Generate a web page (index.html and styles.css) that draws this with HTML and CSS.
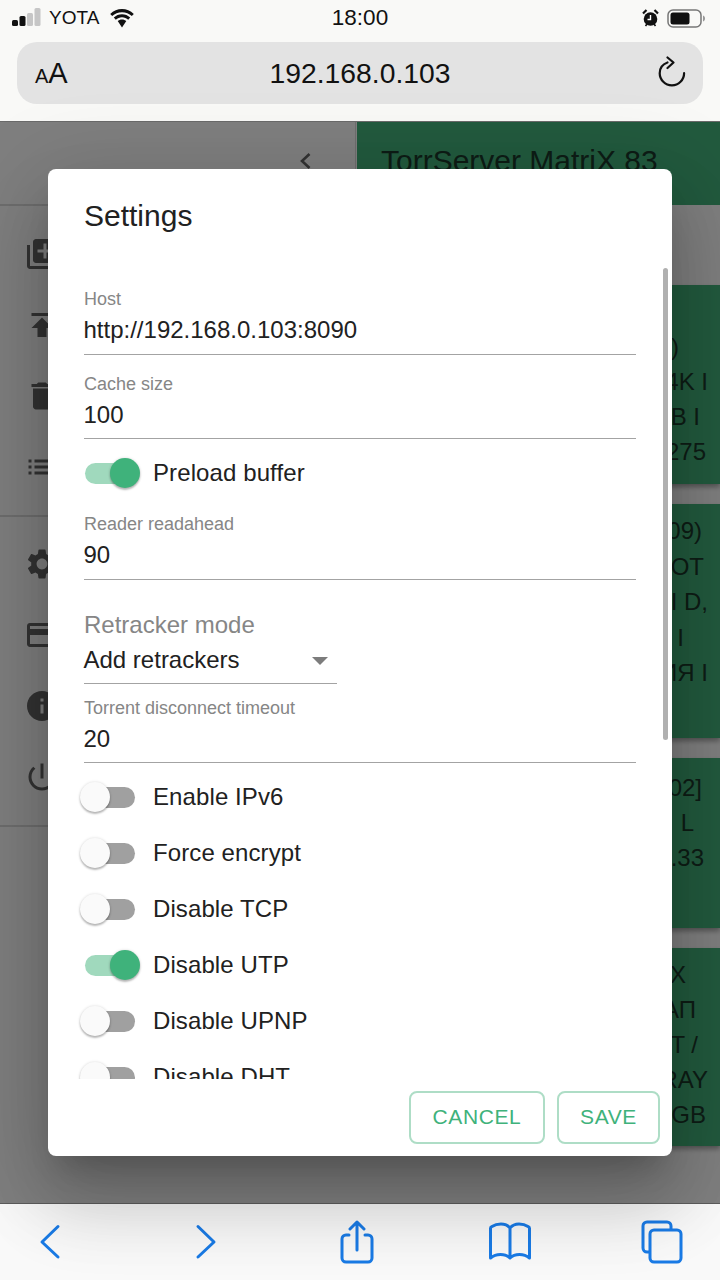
FILE: index.html
```html
<!DOCTYPE html>
<html lang="en">
<head>
  <meta charset="UTF-8" />
  <meta name="viewport" content="width=device-width, initial-scale=1.0" />
  <title>Settings</title>
  <link rel="stylesheet" href="styles.css">
</head>
<body>
  <!-- Safari top -->
  <header class="browser-top">
    <div class="status-bar">
      <div class="status-left">
        <svg class="signal" width="31" height="20" viewBox="0 0 31 20">
          <rect x="1" y="12" width="6" height="6" rx="1.5" fill="#111"/>
          <rect x="8.500" y="8" width="6" height="10" rx="1.5" fill="#111"/>
          <rect x="16" y="5" width="6" height="13" rx="1.5" fill="#c6c6c6"/>
          <rect x="23.500" y="0" width="6" height="18" rx="1.5" fill="#c6c6c6"/>
        </svg>
        <span class="carrier">YOTA</span>
        <svg class="wifi" width="26" height="19" viewBox="0 0 26 19">
          <path d="M13 3.200c3.800 0 7.200 1.500 9.800 3.900l2-2.200C21.500 1.900 17.400 0 13 0S4.500 1.900 1.200 4.900l2 2.200C5.800 4.700 9.200 3.200 13 3.200z" fill="#111"/>
          <path d="M13 8.300c2.400 0 4.500.9 6.200 2.400l2-2.200C19 6.400 16.100 5.200 13 5.200S7 6.400 4.800 8.500l2 2.200c1.700-1.500 3.800-2.400 6.200-2.400z" fill="#111"/>
          <path d="M13 10.400c-1.700 0-3.200.6-4.300 1.700L13 18.400l4.300-6.300c-1.100-1.100-2.600-1.700-4.300-1.700z" fill="#111"/>
        </svg>
      </div>
      <div class="clock">18:00</div>
      <div class="status-right">
        <svg width="17" height="18" viewBox="0 0 17 18">
          <circle cx="8.500" cy="10" r="6.800" fill="#111"/>
          <path d="M1 4.500 4.500 1M16 4.500 12.500 1" stroke="#111" stroke-width="2.200"/>
          <path d="M8.500 6v4.500h-3" stroke="#fff" stroke-width="1.400" fill="none"/>
          <path d="M3.500 17l1.500-2M13.500 17 12 15" stroke="#111" stroke-width="1.600"/>
        </svg>
        <svg width="39" height="19" viewBox="0 0 39 19">
          <rect x="1" y="1" width="33" height="17" rx="5" fill="none" stroke="#777" stroke-width="1.500"/>
          <rect x="3.500" y="3.500" width="19" height="12" rx="2.500" fill="#111"/>
          <path d="M36 6.500c1.500.5 2 1.700 2 3s-.5 2.500-2 3z" fill="#999"/>
        </svg>
      </div>
    </div>
    <div class="address-bar">
      <span class="text-size"><span class="small-a">A</span>A</span>
      <span class="url">192.168.0.103</span>
      <svg class="reload" width="28" height="32" viewBox="0 0 28 32">
        <path d="M9.500 7.500C4.800 9.200 1.700 13.300 1.700 18.200c0 6.700 5.500 12.200 12.200 12.200s12.200-5.500 12.200-12.200" fill="none" stroke="#111" stroke-width="2.200" stroke-linecap="round" transform="translate(0 -1)"/>
        <path d="M9.500 1.500 15.500 6.500 9.500 12" fill="none" stroke="#111" stroke-width="2.200" stroke-linecap="round" stroke-linejoin="round"/>
      </svg>
    </div>
  </header>

  <!-- Page behind the dialog -->
  <main class="app">
    <aside class="sidebar">
      <div class="sidebar-head">
        <svg width="13" height="18" viewBox="0 0 13 18"><path d="M10.500 2 3 9l7.500 7" fill="none" stroke="#666" stroke-width="2.600"/></svg>
      </div>
      <ul class="menu">
        <li><svg viewBox="0 0 24 24"><path d="M4 6H2v14c0 1.100.9 2 2 2h14v-2H4V6zm16-4H8c-1.100 0-2 .9-2 2v12c0 1.100.9 2 2 2h12c1.100 0 2-.9 2-2V4c0-1.100-.9-2-2-2zm-1 9h-4v4h-2v-4H9V9h4V5h2v4h4v2z"/></svg></li>
        <li><svg viewBox="0 0 24 24"><path d="M5 4v2h14V4H5zm0 10h4v6h6v-6h4l-7-7-7 7z"/></svg></li>
        <li><svg viewBox="0 0 24 24"><path d="M6 19c0 1.100.9 2 2 2h8c1.100 0 2-.9 2-2V7H6v12zM19 4h-3.500l-1-1h-5l-1 1H5v2h14V4z"/></svg></li>
        <li><svg viewBox="0 0 24 24"><path d="M3 13h2v-2H3v2zm0 4h2v-2H3v2zm0-8h2V7H3v2zm4 4h14v-2H7v2zm0 4h14v-2H7v2zM7 7v2h14V7H7z"/></svg></li>
      </ul>
      <ul class="menu">
        <li><svg viewBox="0 0 24 24"><path d="M19.140 12.940c.04-.3.06-.61.06-.94 0-.32-.02-.64-.07-.94l2.030-1.580c.18-.14.23-.41.12-.61l-1.920-3.320c-.12-.22-.37-.29-.59-.22l-2.390.96c-.5-.38-1.030-.7-1.620-.94l-.36-2.540c-.04-.24-.24-.41-.48-.41h-3.840c-.24 0-.43.17-.47.41l-.36 2.540c-.59.24-1.130.57-1.620.94l-2.390-.96c-.22-.08-.47 0-.59.22L2.740 8.870c-.12.21-.08.47.12.61l2.030 1.580c-.05.3-.09.63-.09.94s.02.64.07.94l-2.030 1.580c-.18.14-.23.41-.12.61l1.920 3.320c.12.22.37.29.59.22l2.390-.96c.5.38 1.030.7 1.620.94l.36 2.540c.05.24.24.41.48.41h3.840c.24 0 .44-.17.47-.41l.36-2.540c.59-.24 1.130-.56 1.620-.94l2.390.96c.22.08.47 0 .59-.22l1.920-3.320c.12-.22.07-.47-.12-.61l-2.010-1.580zM12 15.600c-1.980 0-3.600-1.620-3.600-3.600s1.620-3.600 3.600-3.600 3.600 1.620 3.600 3.600-1.620 3.600-3.600 3.600z"/></svg></li>
        <li><svg viewBox="0 0 24 24"><path d="M20 4H4c-1.110 0-1.990.89-1.990 2L2 18c0 1.110.89 2 2 2h16c1.110 0 2-.89 2-2V6c0-1.110-.89-2-2-2zm0 14H4v-6h16v6zm0-10H4V6h16v2z"/></svg></li>
        <li><svg viewBox="0 0 24 24"><path d="M12 2C6.480 2 2 6.480 2 12s4.480 10 10 10 10-4.480 10-10S17.520 2 12 2zm1 15h-2v-6h2v6zm0-8h-2V7h2v2z"/></svg></li>
        <li><svg viewBox="0 0 24 24"><path d="M13 3h-2v10h2V3zm4.830 2.170-1.420 1.420C17.990 7.860 19 9.810 19 12c0 3.870-3.130 7-7 7s-7-3.130-7-7c0-2.190 1.010-4.140 2.580-5.420L6.170 5.170C4.230 6.820 3 9.260 3 12c0 4.970 4.030 9 9 9s9-4.030 9-9c0-2.740-1.230-5.180-3.170-6.830z"/></svg></li>
      </ul>
    </aside>

    <section class="content">
      <div class="app-title">TorrServer MatriX 83</div>
      <div class="torrents">
        <article class="torrent torrent-a">
          <div class="end-41">)</div>
          <div class="end-12">4K I</div>
          <div class="end-20">B I</div>
          <div class="end-14">275</div>
        </article>
        <article class="torrent torrent-b">
          <div class="end-18">09)</div>
          <div class="end-16">OT</div>
          <div class="end-12">I D,</div>
          <div class="end-36">I</div>
          <div class="end-12">ИЯ I</div>
        </article>
        <article class="torrent torrent-c">
          <div class="end-18">02]</div>
          <div class="end-26">L</div>
          <div class="end-16">.33</div>
        </article>
        <article class="torrent torrent-d">
          <div class="end-34">X</div>
          <div class="end-24">АП</div>
          <div class="end-22">T /</div>
          <div class="end-12">RAY</div>
          <div class="end-14">GB</div>
        </article>
      </div>
    </section>

    <!-- Settings dialog -->
    <div class="backdrop">
      <div class="dialog">
        <h2 class="dialog-title">Settings</h2>
        <div class="dialog-body">
          <div class="field first">
            <label>Host</label>
            <div class="value">http://192.168.0.103:8090</div>
          </div>
          <div class="field">
            <label>Cache size</label>
            <div class="value">100</div>
          </div>
          <div class="toggle-row preload"><span class="switch on"></span><span class="toggle-label">Preload buffer</span></div>
          <div class="field">
            <label>Reader readahead</label>
            <div class="value">90</div>
          </div>
          <div class="select-field">
            <label>Retracker mode</label>
            <div class="select-value">Add retrackers<span class="caret"></span></div>
          </div>
          <div class="field">
            <label>Torrent disconnect timeout</label>
            <div class="value">20</div>
          </div>
          <div class="toggle-row"><span class="switch"></span><span class="toggle-label">Enable IPv6</span></div>
          <div class="toggle-row"><span class="switch"></span><span class="toggle-label">Force encrypt</span></div>
          <div class="toggle-row"><span class="switch"></span><span class="toggle-label">Disable TCP</span></div>
          <div class="toggle-row"><span class="switch on"></span><span class="toggle-label">Disable UTP</span></div>
          <div class="toggle-row"><span class="switch"></span><span class="toggle-label">Disable UPNP</span></div>
          <div class="toggle-row"><span class="switch"></span><span class="toggle-label">Disable DHT</span></div>
        </div>
        <div class="scroll-thumb"></div>
        <div class="dialog-actions">
          <button class="btn btn-cancel">Cancel</button>
          <button class="btn btn-save">Save</button>
        </div>
      </div>
    </div>
  </main>

  <!-- Safari bottom -->
  <footer class="browser-bottom">
    <svg width="44" height="44" viewBox="0 0 44 44"><path d="M26 6.500 10 22l16 15" fill="none" stroke="#1a7be6" stroke-width="3" stroke-linecap="round" stroke-linejoin="round"/></svg>
    <svg width="44" height="44" viewBox="0 0 44 44"><path d="M14 6.500 30 22 14 37" fill="none" stroke="#1a7be6" stroke-width="3" stroke-linecap="round" stroke-linejoin="round"/></svg>
    <svg width="44" height="44" viewBox="0 0 44 44"><path d="M13 15H10a4 4 0 0 0-4 4v19a4 4 0 0 0 4 4h22a4 4 0 0 0 4-4V19a4 4 0 0 0-4-4h-3M21 30V2M14 9l7-7 7 7" fill="none" stroke="#1a7be6" stroke-width="3" stroke-linecap="round" stroke-linejoin="round"/></svg>
    <svg width="44" height="44" viewBox="0 0 44 44"><path d="M22 8c-2.500-3-5.500-4-9-4-3.500 0-6 .5-9 2.500a2 2 0 0 0-1.500 2V38c3-2.500 6-3.500 10-3.500 4 0 7 1 9.500 3.500 2.500-2.500 5.500-3.500 9.500-3.500s7 1 10 3.500V8.500a2 2 0 0 0-1.500-2C37 4.500 34.500 4 31 4c-3.500 0-6.500 1-9 4zm0 0v30" fill="none" stroke="#1a7be6" stroke-width="3" stroke-linejoin="round"/></svg>
    <svg width="44" height="44" viewBox="0 0 44 44"><path d="M9 32H7a4 4 0 0 1-4-4V6a4 4 0 0 1 4-4h20a4 4 0 0 1 4 4v4" fill="none" stroke="#1a7be6" stroke-width="3"/><rect x="10" y="10" width="31" height="32" rx="4" fill="none" stroke="#1a7be6" stroke-width="3"/></svg>
  </footer>
</body>
</html>
```

FILE: styles.css
```css
* { box-sizing: border-box; }
html, body { margin: 0; padding: 0; }
body { width: 720px; height: 1280px; display: flex; flex-direction: column; overflow: hidden; font-family: "Liberation Sans", Arial, sans-serif; color: #111; background: #fff; }

/* browser top */
.browser-top { height: 122px; flex: none; background: #f9f9f7; padding: 0 17px; border-bottom: 1px solid #6a6a6a; }
.status-bar { height: 42px; margin: 0 -17px; padding: 0 11px 6px; display: grid; grid-template-columns: 1fr auto 1fr; align-items: center; }
.status-left { display: flex; align-items: center; }
.signal { margin-top: -1px; }
.carrier { font-size: 19px; margin-left: 7px; }
.wifi { margin-left: 10px; }
.clock { font-size: 22.500px; }
.status-right { display: flex; justify-content: flex-end; align-items: center; gap: 8px; margin-right: 3px; }
.address-bar { height: 62px; background: #e3e3e3; border-radius: 20px; display: grid; grid-template-columns: 1fr auto 1fr; align-items: center; padding: 0 17px 0 17px; }
.text-size { font-size: 29px; margin-left: 1px; }
.small-a { font-size: 20px; }
.url { font-size: 28.300px; }
.reload { margin-top: -2px; justify-self: end; }

/* page behind the dialog */
.app { flex: 1; position: relative; display: flex; min-height: 0; background: #fff; }
.sidebar { width: 357px; flex: none; }
.sidebar-head { height: 84px; display: flex; align-items: center; justify-content: flex-end; padding: 0 43px 4px 0; border-bottom: 2px solid #ddd; border-right: 1px solid #ddd; margin-right: 1px; }
.menu { list-style: none; margin: 0 1px 0 0; padding: 12px 0 12.500px; border-bottom: 2px solid #ddd; border-right: 1px solid #ddd; }
.menu li { height: 71px; display: flex; align-items: center; padding-left: 24px; }
.menu svg { width: 36px; height: 36px; fill: #666; }
.content { flex: 1; min-width: 0; background: #fff; overflow: hidden; }
.app-title { height: 83px; background: #44b47c; font-size: 30px; padding: 22px 0 0 24px; color: #1c3a2c; white-space: nowrap; }
.torrents { padding-top: 80px; display: flex; flex-direction: column; gap: 20px; }
.torrent { background: #44b47c; font-size: 24px; line-height: 35px; text-align: right; color: #1c3a2c; box-shadow: 0 3px 5px rgba(0,0,0,.35); }
.torrent-a { height: 199px; padding-top: 44px; }
.torrent-b { height: 234px; padding-top: 9px; line-height: 35.500px; }
.torrent-c { height: 170px; padding-top: 12px; }
.torrent-d { height: 198px; padding-top: 9px; }
.end-12 { padding-right: 12px; }
.end-14 { padding-right: 14px; }
.end-16 { padding-right: 16px; }
.end-18 { padding-right: 18px; }
.end-20 { padding-right: 20px; }
.end-22 { padding-right: 22px; }
.end-24 { padding-right: 24px; }
.end-26 { padding-right: 26px; }
.end-34 { padding-right: 34px; }
.end-36 { padding-right: 36px; }
.end-41 { padding-right: 41px; }

/* dialog */
.backdrop { position: absolute; inset: 0; background: rgba(0,0,0,.5); display: flex; align-items: center; justify-content: center; }
.dialog { width: 624px; height: 987px; background: #fff; border-radius: 8px; position: relative; display: flex; flex-direction: column; box-shadow: 0 21px 29px -13px rgba(0,0,0,.2), 0 46px 73px 6px rgba(0,0,0,.14), 0 17px 88px 15px rgba(0,0,0,.12); }
.dialog-title { margin: 0; height: 94px; flex: none; padding: 28px 36px 0; font-size: 30px; line-height: 38px; font-weight: normal; color: #212121; }
.dialog-body { flex: 1; min-height: 0; overflow: hidden; padding: 25px 36px 0; }
.scroll-thumb { position: absolute; top: 99px; right: 4px; width: 5px; height: 472px; background: #b0b0b0; border-radius: 3px; }
.field { height: 66.500px; margin-top: 18px; border-bottom: 1.500px solid #a3a3a3; }
.field.first { margin-top: 0; }
.field label { display: block; font-size: 18px; line-height: 22px; color: #868686; }
.value { font-size: 24px; line-height: 28px; margin: 6px 0 0 -.5px; color: #212121; }
.select-field { width: 253px; height: 73px; margin-top: 31px; border-bottom: 1.500px solid #a3a3a3; margin-bottom: -5px; }
.select-field label { display: block; font-size: 24px; line-height: 28px; color: #868686; }
.select-value { position: relative; font-size: 24px; line-height: 28px; margin: 7px 0 0 -.5px; color: #212121; }
.caret { position: absolute; top: 11px; right: 9px; border-style: solid; border-width: 8px 8px 0; border-color: #7c7c7c transparent transparent; }
.toggle-row { height: 56px; margin-top: 6.500px; display: flex; align-items: center; font-size: 24px; letter-spacing: .1px; color: #212121; }
.toggle-row + .toggle-row { margin-top: 0; }
.toggle-label { margin-top: -2px; }
.preload { margin-top: 6px; margin-bottom: -6px; }
.preload .toggle-label { margin-top: 0; }
.switch { width: 50px; height: 21px; margin: 0 18px 0 1px; border-radius: 11px; background: #a0a0a0; position: relative; flex: none; }
.switch::after { content: ""; position: absolute; top: -5px; left: -5px; width: 30px; height: 30px; border-radius: 50%; background: #fafafa; box-shadow: 0 2px 2px rgba(0,0,0,.25), 0 0 3px rgba(0,0,0,.15); }
.switch.on { background: #a0d9bd; }
.switch.on::after { left: 25px; background: #3fb27b; }
.dialog-actions { height: 77px; flex: none; display: flex; justify-content: flex-end; gap: 12px; padding: 12px 12px 12px 0; }
.btn { height: 53px; background: #fff; border: 2px solid #aeddc6; border-radius: 8px; color: #3fb27b; font-family: inherit; font-size: 21px; letter-spacing: .6px; text-transform: uppercase; padding: 0 0 2px; }
.btn-cancel { width: 136px; }
.btn-save { width: 103px; }

/* browser bottom */
.browser-bottom { height: 77px; width: 760px; margin-left: -22px; flex: none; background: #f9f9f9; border-top: 1px solid #5c5c5c; display: grid; grid-template-columns: repeat(5, 152px); padding: 16px 0 0; justify-items: center; align-items: start; }
```
